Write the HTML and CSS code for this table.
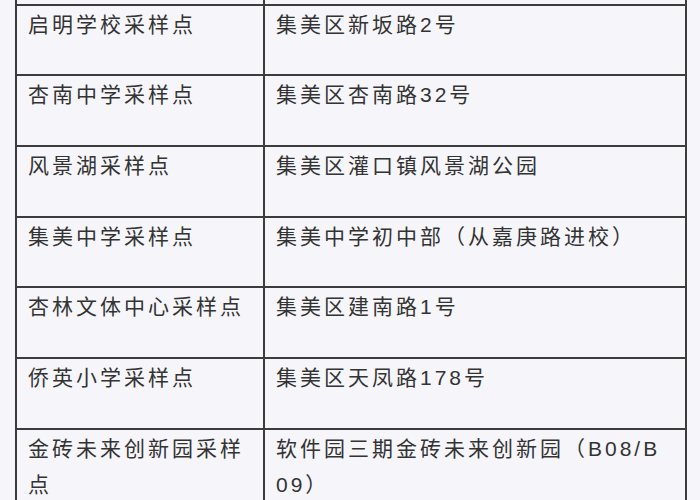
FILE: index.html
```html
<!DOCTYPE html>
<html lang="zh-CN">
<head>
<meta charset="utf-8">
<link rel="stylesheet" href="styles.css">
<title>采样点</title>
</head>
<body>
<table class="sites">
  <colgroup><col class="c-name"><col class="c-addr"></colgroup>
  <tbody>
    <tr class="prev"><td>&nbsp;</td><td>&nbsp;</td></tr>
    <tr><td>启明学校采样点</td><td>集美区新坂路2号</td></tr>
    <tr><td>杏南中学采样点</td><td>集美区杏南路32号</td></tr>
    <tr><td>风景湖采样点</td><td>集美区灌口镇风景湖公园</td></tr>
    <tr><td>集美中学采样点</td><td>集美中学初中部（从嘉庚路进校）</td></tr>
    <tr><td>杏林文体中心采样点</td><td>集美区建南路1号</td></tr>
    <tr><td>侨英小学采样点</td><td>集美区天凤路178号</td></tr>
    <tr><td>金砖未来创新园采样点</td><td>软件园三期金砖未来创新园（B08/B09）</td></tr>
  </tbody>
</table>
</body>
</html>
```

FILE: styles.css
```css
html, body {
  margin: 0;
  padding: 0;
  background: #f6f6fa;
}
body {
  overflow: hidden;
}
.sites {
  margin: -67px 0 0 15px;
  border-collapse: collapse;
  table-layout: fixed;
  width: 670px;
  font-family: "Liberation Sans", "Noto Sans CJK SC", sans-serif;
  font-size: 21px;
  letter-spacing: 3px;
  color: #333333;
}
.c-name { width: 248px; }
.c-addr { width: 422px; }
.sites td {
  border: 2px solid #3c3c3c;
  padding: 1px 13px 31.7px 11px;
  line-height: 36px;
  vertical-align: top;
  word-break: break-all;
}
```
